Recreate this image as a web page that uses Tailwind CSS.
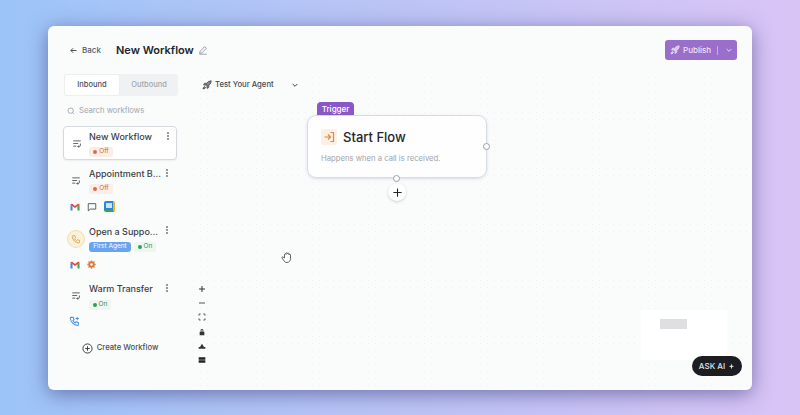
<!DOCTYPE html>
<html lang="en">
<head>
    <meta charset="UTF-8">
    <meta name="viewport" content="width=device-width, initial-scale=1.0">
    <title>New Workflow</title>
    <script src="https://cdn.jsdelivr.net/npm/@tailwindcss/browser@4"></script>
</head>
<body class="w-[800px] h-[415px] overflow-hidden bg-gradient-to-r from-[#9cc4f8] via-[#bcc4f5] to-[#dac4f6] font-['Inter',sans-serif] text-[#2b2f36]">

    <!-- Window -->
    <div class="pt-[26px] pl-[48px]">
        <div class="w-[704px] h-[364px] bg-[#fafbfb] rounded-[6px] shadow-[0_4px_20px_rgba(60,60,130,0.6)] flex flex-col overflow-hidden">

            <!-- Header -->
            <header class="h-[48px] shrink-0 flex items-center pl-[21px] pr-[15px]">
                <a class="flex items-center gap-[4px] text-[8px] font-medium text-[#555b66] w-[47px]">
                    <svg width="9" height="9" viewBox="0 0 24 24" fill="none" stroke="#444" stroke-width="2.5"><path d="M20 12H5M11 6l-6 6 6 6"/></svg>
                    Back
                </a>
                <h1 class="text-[11px] leading-none font-semibold text-[#23262c]">New Workflow</h1>
                <svg class="ml-[4px]" width="10" height="10" viewBox="0 0 24 24" fill="none" stroke="#8b8f96" stroke-width="2"><path d="M4 20l1-5L16 4l4 4L9 19zM3 22h18"/></svg>
                <div class="ml-auto w-[72px] h-[20px] rounded-[3px] bg-[#9a6fcb] flex items-center text-[8px] font-medium text-[#ece3f6]">
                    <svg class="ml-[5px]" width="10" height="10" viewBox="0 0 24 24" fill="#d9c8ec" stroke="#e6daf3" stroke-width="2"><path d="M4.500 16.500c-1.500 1.260-2 5-2 5s3.740-.5 5-2c.71-.84.7-2.130-.09-2.910a2.180 2.180 0 0 0-2.910-.09z"/><path d="m12 15-3-3a22 22 0 0 1 2-3.950A12.880 12.880 0 0 1 22 2c0 2.720-.78 7.500-6 11a22.350 22.350 0 0 1-4 2z"/><path d="M9 12H4s.55-3.030 2-4c1.620-1.080 5 0 5 0M12 15v5s3.030-.55 4-2c1.080-1.620 0-5 0-5"/></svg>
                    <span class="ml-[3px]">Publish</span>
                    <span class="ml-[6px] w-px h-[9px] bg-[#c6aee0]"></span>
                    <svg class="ml-[7px]" width="8" height="8" viewBox="0 0 24 24" fill="none" stroke="#e6daf3" stroke-width="3"><path d="M5 9l7 7 7-7"/></svg>
                </div>
            </header>

            <div class="flex-1 flex min-h-0">

                <!-- Sidebar -->
                <aside class="w-[142px] shrink-0 pl-[15px] flex flex-col">
                    <div class="ml-[1px] w-[114px] h-[22px] bg-[#f0f1f3] rounded-[3px] flex text-[7.500px] font-medium">
                        <div class="w-[56px] bg-white rounded-[3px] border border-[#eceef0] flex items-center justify-center text-[#4a4f58]">Inbound</div>
                        <div class="flex-1 flex items-center justify-center text-[#a3a7ae]">Outbound</div>
                    </div>

                    <div class="ml-[4px] mt-[9px] h-[12px] flex items-center gap-[4px] text-[7.700px] text-[#a2a6ad]">
                        <svg width="8" height="8" viewBox="0 0 24 24" fill="none" stroke="#8e9299" stroke-width="2.2"><circle cx="11" cy="11" r="8"/><path d="M21 21l-4.500-4.500"/></svg>
                        Search workflows
                    </div>

                    <!-- Selected workflow -->
                    <div class="mt-[9px] w-[114px] h-[34px] bg-white border border-[#d6d9de] rounded-[4px] shadow-[0_1px_2px_rgba(0,0,0,0.06)] flex relative">
                        <svg class="absolute left-[8px] top-[12px]" width="10" height="9" viewBox="0 0 24 24" fill="none" stroke="#555" stroke-width="2.4"><path d="M2 5h20M2 12h13M2 19h8M21 12v5a3 3 0 0 1-3 3h-4M17 17l-3 3 3 3"/></svg>
                        <div class="pl-[25px] pt-[4px]">
                            <div class="text-[9px] leading-[12px] font-medium text-[#3a3e46]">New Workflow</div>
                            <span class="mt-[4px] w-[24px] h-[10px] rounded-[2px] bg-[#fbeee8] text-[6.500px] text-[#c86a4a] flex items-center justify-center gap-[2px]"><i class="w-[4px] h-[4px] rounded-full bg-[#e0694a]"></i>Off</span>
                        </div>
                        <div class="absolute left-[103px] top-[5px] flex flex-col gap-[1px]"><i class="w-[2px] h-[2px] rounded-full bg-[#777]"></i><i class="w-[2px] h-[2px] rounded-full bg-[#777]"></i><i class="w-[2px] h-[2px] rounded-full bg-[#777]"></i></div>
                    </div>

                    <!-- Appointment -->
                    <div class="mt-[7px] w-[114px] h-[57px] flex relative">
                        <svg class="absolute left-[8px] top-[9px]" width="10" height="9" viewBox="0 0 24 24" fill="none" stroke="#555" stroke-width="2.4"><path d="M2 5h20M2 12h13M2 19h8M21 12v5a3 3 0 0 1-3 3h-4M17 17l-3 3 3 3"/></svg>
                        <div class="pl-[26px] pt-[1px]">
                            <div class="text-[9px] leading-[12px] font-medium text-[#3a3e46]">Appointment B...</div>
                            <span class="mt-[4px] w-[24px] h-[10px] rounded-[2px] bg-[#fbeee8] text-[6.500px] text-[#c86a4a] flex items-center justify-center gap-[2px]"><i class="w-[4px] h-[4px] rounded-full bg-[#e0694a]"></i>Off</span>
                        </div>
                        <div class="absolute left-[103px] top-[2px] flex flex-col gap-[1px]"><i class="w-[2px] h-[2px] rounded-full bg-[#777]"></i><i class="w-[2px] h-[2px] rounded-full bg-[#777]"></i><i class="w-[2px] h-[2px] rounded-full bg-[#777]"></i></div>
                        <div class="absolute left-[7px] top-[34px] flex items-center gap-[7px]">
                            <svg width="10" height="8" viewBox="0 0 20 16"><path d="M1 15V3l9 7 9-7v12h-4V7l-5 4-5-4v8z" fill="#e8e8e8"/><path d="M1 15V3l4 3v9z" fill="#4a86e8"/><path d="M15 15V6l4-3v12z" fill="#34a853"/><path d="M1 3c1-2 3-2 4-1l5 4 5-4c1-1 3-1 4 1l-9 7z" fill="#ea4335"/></svg>
                            <svg width="10" height="10" viewBox="0 0 24 24" fill="none" stroke="#444" stroke-width="2"><path d="M3 4h18v13H8l-5 4z"/></svg>
                            <div class="w-[11px] h-[11px] rounded-[2px] bg-[#2f86d8] border-r-[2px] border-b-[2px] border-r-[#f0b429] border-b-[#3aa35c] flex items-center justify-center"><i class="w-[6px] h-[5px] bg-[#cfe3f7]"></i></div>
                        </div>
                    </div>

                    <!-- Support -->
                    <div class="w-[114px] h-[58px] flex relative">
                        <div class="absolute left-[4px] top-[6px] w-[18px] h-[18px] rounded-full bg-[#fbf1d9] border border-[#f0dfb4] flex items-center justify-center">
                            <svg width="10" height="10" viewBox="0 0 24 24" fill="none" stroke="#cfa95e" stroke-width="2.2"><path d="M5 4h4l2 5-2.500 2a12 12 0 0 0 5 5l2-2.500 5 2v4c0 1-1 2-2 2A17 17 0 0 1 3 6c0-1 1-2 2-2z"/></svg>
                        </div>
                        <div class="pl-[26px] pt-[2px]">
                            <div class="text-[9px] leading-[12px] font-medium text-[#3a3e46]">Open a Suppo...</div>
                            <div class="mt-[4px] flex items-center gap-[3px] w-[88px]">
                                <span class="w-[42px] h-[10px] rounded-[3px] bg-[#66a5f2] text-[6.500px] text-white flex items-center justify-center whitespace-nowrap">First Agent</span>
                                <span class="w-[22px] h-[10px] rounded-[2px] bg-[#eef6f0] text-[6.500px] text-[#3f8a5d] flex items-center justify-center gap-[2px]"><i class="w-[4px] h-[4px] rounded-full bg-[#2f9e5f]"></i>On</span>
                            </div>
                        </div>
                        <div class="absolute left-[103px] top-[2px] flex flex-col gap-[1px]"><i class="w-[2px] h-[2px] rounded-full bg-[#777]"></i><i class="w-[2px] h-[2px] rounded-full bg-[#777]"></i><i class="w-[2px] h-[2px] rounded-full bg-[#777]"></i></div>
                        <div class="absolute left-[7px] top-[36px] flex items-center gap-[7px]">
                            <svg width="10" height="8" viewBox="0 0 20 16"><path d="M1 15V3l9 7 9-7v12h-4V7l-5 4-5-4v8z" fill="#e8e8e8"/><path d="M1 15V3l4 3v9z" fill="#4a86e8"/><path d="M15 15V6l4-3v12z" fill="#34a853"/><path d="M1 3c1-2 3-2 4-1l5 4 5-4c1-1 3-1 4 1l-9 7z" fill="#ea4335"/></svg>
                            <svg width="9" height="9" viewBox="0 0 24 24" fill="none" stroke="#e07b35" stroke-width="5"><circle cx="12" cy="12" r="6"/><path d="M12 1v4M12 19v4M1 12h4M19 12h4M4 4l3 3M17 17l3 3M20 4l-3 3M7 17l-3 3" stroke-width="3.5"/></svg>
                        </div>
                    </div>

                    <!-- Warm transfer -->
                    <div class="w-[114px] h-[44px] flex relative">
                        <svg class="absolute left-[8px] top-[9px]" width="10" height="9" viewBox="0 0 24 24" fill="none" stroke="#555" stroke-width="2.4"><path d="M2 5h20M2 12h13M2 19h8M21 12v5a3 3 0 0 1-3 3h-4M17 17l-3 3 3 3"/></svg>
                        <div class="pl-[26px] pt-[1px]">
                            <div class="text-[9px] leading-[12px] font-medium text-[#3a3e46]">Warm Transfer</div>
                            <span class="mt-[5px] w-[22px] h-[10px] rounded-[2px] bg-[#eef6f0] text-[6.500px] text-[#3f8a5d] flex items-center justify-center gap-[2px]"><i class="w-[4px] h-[4px] rounded-full bg-[#2f9e5f]"></i>On</span>
                        </div>
                        <div class="absolute left-[103px] top-[2px] flex flex-col gap-[1px]"><i class="w-[2px] h-[2px] rounded-full bg-[#777]"></i><i class="w-[2px] h-[2px] rounded-full bg-[#777]"></i><i class="w-[2px] h-[2px] rounded-full bg-[#777]"></i></div>
                        <svg class="absolute left-[6px] top-[34px]" width="11" height="11" viewBox="0 0 24 24" fill="none" stroke="#4a8fe0" stroke-width="2.2"><path d="M5 3h4l2 5-2.500 2a12 12 0 0 0 5 5l2-2.500 5 2v4c0 1-1 2-2 2A17 17 0 0 1 3 5c0-1 1-2 2-2zM18 2v7M14.500 5.500h7"/></svg>
                    </div>

                    <div class="mt-[12px] w-[114px] h-[20px] flex items-center justify-center gap-[4px] text-[7.700px] font-medium text-[#4a4f58]">
                        <svg width="11" height="11" viewBox="0 0 24 24" fill="none" stroke="#333" stroke-width="2"><circle cx="12" cy="12" r="10"/><path d="M12 7v10M7 12h10"/></svg>
                        Create Workflow
                    </div>
                </aside>

                <!-- Canvas -->
                <main class="flex-1 relative bg-[radial-gradient(#eef0f2_0.6px,transparent_0.6px)] bg-[size:7px_7px]">
                    <div class="absolute left-[12px] top-[3px] h-[16px] flex items-center text-[7.700px] font-medium text-[#444952]">
                        <svg width="10" height="10" viewBox="0 0 24 24" fill="#888" stroke="#444" stroke-width="2"><path d="M4.500 16.500c-1.500 1.260-2 5-2 5s3.740-.5 5-2c.71-.84.7-2.130-.09-2.910a2.180 2.180 0 0 0-2.910-.09z"/><path d="m12 15-3-3a22 22 0 0 1 2-3.950A12.880 12.880 0 0 1 22 2c0 2.720-.78 7.500-6 11a22.350 22.350 0 0 1-4 2z"/><path d="M9 12H4s.55-3.030 2-4c1.620-1.080 5 0 5 0M12 15v5s3.030-.55 4-2c1.080-1.620 0-5 0-5"/></svg>
                        <span class="ml-[3px]">Test Your Agent</span>
                        <svg class="ml-[17px]" width="8" height="8" viewBox="0 0 24 24" fill="none" stroke="#444" stroke-width="3"><path d="M5 9l7 7 7-7"/></svg>
                    </div>

                    <!-- Flow node -->
                    <div class="absolute left-[127px] top-[28px] w-[37px] h-[14px] rounded-t-[4px] bg-[#8a58c6] text-[8px] font-medium text-white flex items-center justify-center">Trigger</div>
                    <div class="absolute left-[117px] top-[41px] w-[180px] h-[63px] bg-white/80 border border-[#d5dce6] rounded-[9px] shadow-[0_1px_3px_rgba(90,110,150,0.2)]">
                        <div class="flex items-center mt-[13px] ml-[13px]">
                            <div class="w-[16px] h-[16px] rounded-[2px] bg-[#fbf0e6] flex items-center justify-center">
                                <svg width="12" height="12" viewBox="0 0 24 24" fill="none" stroke="#e08a3c" stroke-width="2.4"><path d="M3 12h12M10 7l5 5-5 5M15 3h6v18h-6"/></svg>
                            </div>
                            <span class="ml-[6px] text-[13px] leading-none font-medium text-[#23262c]">Start Flow</span>
                        </div>
                        <p class="mt-[9px] ml-[13px] text-[7.700px] leading-[10px] text-[#a0a4ab]">Happens when a call is received.</p>
                    </div>
                    <i class="absolute left-[293px] top-[69px] w-[7px] h-[7px] rounded-full bg-white border border-[#9aa0a8]"></i>
                    <i class="absolute left-[203px] top-[101px] w-[7px] h-[7px] rounded-full bg-white border border-[#9aa0a8]"></i>
                    <div class="absolute left-[198px] top-[109px] w-[18px] h-[18px] rounded-full bg-white shadow-[0_1px_3px_rgba(0,0,0,0.18)] flex items-center justify-center">
                        <svg width="11" height="11" viewBox="0 0 24 24" fill="none" stroke="#222" stroke-width="2.400"><path d="M12 3v18M3 12h18"/></svg>
                    </div>

                    <!-- Hand cursor -->
                    <svg class="absolute left-[91px] top-[177px]" width="12" height="13" viewBox="0 0 24 24" fill="#fff" stroke="#555" stroke-width="1.800"><path d="M7 13V6a1.500 1.500 0 0 1 3 0V4a1.500 1.500 0 0 1 3 0v1a1.500 1.500 0 0 1 3 0v2a1.500 1.500 0 0 1 3 0v7c0 5-3 8-7 8s-5-2-7-5l-3-4c-1-2 1-3 2-2z"/></svg>

                    <!-- Zoom controls -->
                    <div class="absolute left-[7px] top-[211px] w-[10px] flex flex-col items-center">
                        <svg width="8" height="8" viewBox="0 0 24 24" fill="none" stroke="#333" stroke-width="3"><path d="M12 3v18M3 12h18"/></svg>
                        <svg class="mt-[6px]" width="8" height="8" viewBox="0 0 24 24" fill="none" stroke="#555" stroke-width="3"><path d="M3 12h18"/></svg>
                        <svg class="mt-[6px]" width="8" height="8" viewBox="0 0 24 24" fill="none" stroke="#444" stroke-width="2.500"><path d="M3 8V3h5M16 3h5v5M21 16v5h-5M8 21H3v-5"/></svg>
                        <svg class="mt-[7px]" width="8" height="8" viewBox="0 0 24 24" fill="#333"><path d="M5 11h14v11H5zM8 11V7a4 4 0 0 1 8 0v4h-2.500V7a1.500 1.500 0 0 0-3 0v4z"/></svg>
                        <svg class="mt-[6px]" width="8" height="8" viewBox="0 0 24 24" fill="#333"><path d="M12 5l6 10h4v5H2v-5h4z"/></svg>
                        <svg class="mt-[6px]" width="8" height="8" viewBox="0 0 24 24" fill="#222"><path d="M2 4h20v7H2zM2 13h20v7H2z"/></svg>
                    </div>

                    <!-- Minimap -->
                    <div class="absolute left-[451px] top-[236px] w-[86px] h-[50px] bg-white">
                        <div class="ml-[19px] mt-[9px] w-[27px] h-[10px] bg-[#dfdfe1]"></div>
                    </div>

                    <!-- Ask AI -->
                    <div class="absolute left-[502px] top-[282px] w-[50px] h-[20px] rounded-full bg-[#1b1d22] text-[8px] font-medium text-[#e4e4e6] flex items-center justify-center gap-[3px]">
                        ASK AI
                        <svg width="7" height="7" viewBox="0 0 24 24" fill="#ddd"><path d="M12 2l2.500 7 7 2.500-7 2.500-2.500 7-2.500-7-7-2.500 7-2.500z"/></svg>
                    </div>
                </main>
            </div>
        </div>
    </div>
</body>
</html>
